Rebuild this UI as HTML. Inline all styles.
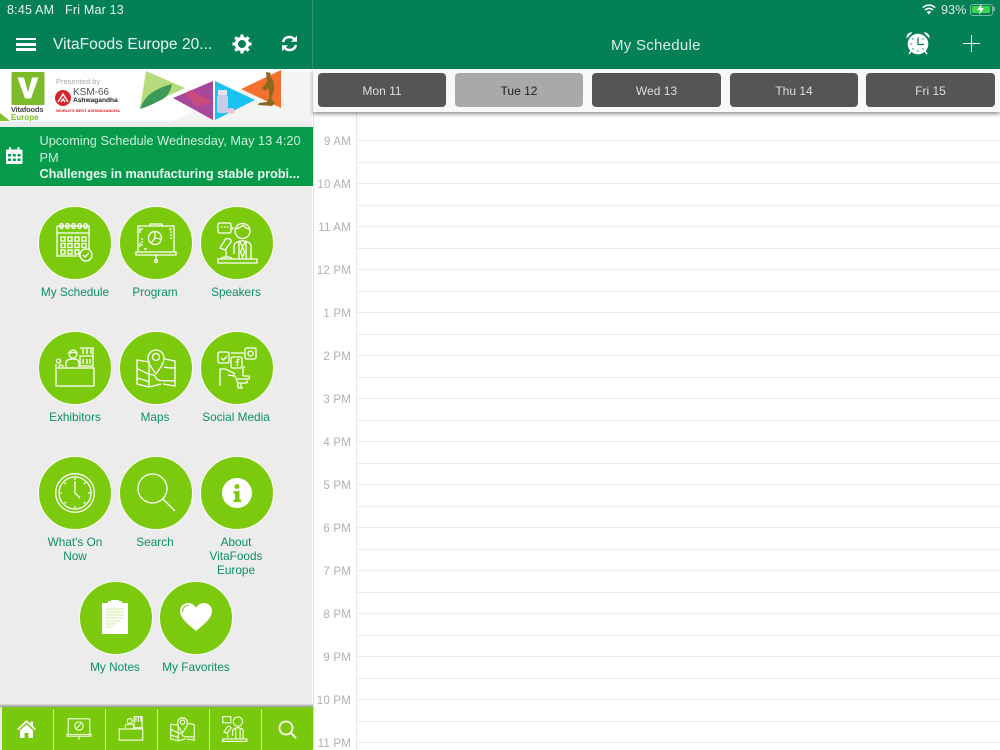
<!DOCTYPE html>
<html><head><meta charset="utf-8">
<style>
html,body{margin:0;padding:0;width:1000px;height:750px;overflow:hidden;background:#fff;font-family:"Liberation Sans",sans-serif}
.a{position:absolute}
.t{position:absolute;white-space:nowrap}
.c{position:absolute;width:72px;height:72px;border-radius:50%;background:#7bca0e;border:1px solid #fbfdf6}
.l{position:absolute;width:84px;text-align:center;color:#0b8f68;font-size:11.8px;line-height:14px}
.btn{position:absolute;top:73px;height:34px;border-radius:4px;background:#555;color:#ddd;font-size:12px;line-height:36px;text-align:center}
.hr{position:absolute;left:357px;right:0;height:1px;background:#ebebeb}
.h{position:absolute;width:351px;left:0;text-align:right;font-size:11.5px;letter-spacing:.2px;color:#b0b0b0;font-weight:normal}
svg{position:absolute;overflow:visible}
svg .s{fill:none;stroke:#fff;stroke-width:1.3}
.bi .s{stroke:#f2fbe4;stroke-width:1.9}
</style></head><body>

<!-- Header -->
<div class="a" style="left:0;top:0;width:1000px;height:69px;background:#038055"></div>
<div class="a" style="left:312px;top:0;width:1px;height:69px;background:#2f946f"></div>
<div class="t" style="left:7px;top:3px;font-size:12.5px;color:#e6f3ee;letter-spacing:.2px">8:45 AM</div>
<div class="t" style="left:65px;top:3px;font-size:12.5px;color:#e6f3ee;letter-spacing:.2px">Fri Mar 13</div>
<div class="a" style="left:16px;top:37.500px;width:20px;height:2.500px;background:#fff"></div>
<div class="a" style="left:16px;top:43px;width:20px;height:2.500px;background:#fff"></div>
<div class="a" style="left:16px;top:48px;width:20px;height:2.500px;background:#fff"></div>
<div class="t" style="left:53px;top:36px;font-size:15.5px;color:#eaf5f0;letter-spacing:.05px">VitaFoods Europe 20...</div>

<!-- Gear -->
<svg style="left:232px;top:34px" width="20" height="20" viewBox="0 0 20 20"><circle cx="10" cy="10" r="5.6" fill="none" stroke="#fff" stroke-width="3.2"/><g stroke="#fff" stroke-width="3.2"><path d="M10 0.5v3M10 16.5v3M.5 10h3M16.5 10h3M3.3 3.3l2.1 2.1M14.6 14.6l2.1 2.1M3.3 16.7l2.1-2.1M14.6 5.4l2.1-2.1"/></g></svg>
<!-- Sync -->
<svg style="left:281px;top:35px" width="17" height="17" viewBox="0 0 17 17"><path d="M2 7C3 3.5 5.5 2 8.5 2c2.2 0 3.700 1 4.700 2.200" fill="none" stroke="#fff" stroke-width="2.400"/><path d="M16 .8v6h-6z" fill="#fff"/><path d="M15 10c-1 3.500-3.500 5-6.500 5-2.200 0-3.700-1-4.700-2.200" fill="none" stroke="#fff" stroke-width="2.400"/><path d="M1 16.200v-6h6z" fill="#fff"/></svg>

<div class="t" style="left:611px;top:37px;font-size:15px;color:#dcefe7;letter-spacing:.27px">My Schedule</div>

<!-- Alarm -->
<svg style="left:905px;top:31px" width="26" height="25" viewBox="0 0 26 25"><path d="M1.500 7.500C1 3.500 4 .8 7.500 1.500z" fill="#fff"/><path d="M24.500 7.500C25 3.500 22 .8 18.500 1.500z" fill="#fff"/><path d="M4 23l2-3M22 23l-2-3" stroke="#fff" stroke-width="1.500"/><circle cx="13" cy="13" r="10.300" fill="#fff"/><path d="M13 6.500V13.500H19" fill="none" stroke="#038055" stroke-width="1.300"/><g fill="#038055"><circle cx="13" cy="20" r=".7"/><circle cx="6" cy="13" r=".7"/><circle cx="8" cy="8" r=".7"/><circle cx="18" cy="8" r=".7"/><circle cx="8" cy="18" r=".7"/><circle cx="18" cy="18" r=".7"/></g></svg>
<!-- Plus -->
<div class="a" style="left:963px;top:43px;width:17px;height:1.300px;background:#fff"></div>
<div class="a" style="left:971px;top:35px;width:1.300px;height:17px;background:#fff"></div>

<!-- Status right -->
<svg style="left:922px;top:4px" width="14" height="11" viewBox="0 0 14 11"><path d="M.8 3.700C4.500.3 9.500.3 13.200 3.700M3 6C5.500 3.900 8.500 3.900 11 6" fill="none" stroke="#fff" stroke-width="1.500"/><path d="M7 10.500L4.700 8C6 6.900 8 6.900 9.300 8z" fill="#fff"/></svg>
<div class="t" style="left:941px;top:3px;font-size:12.7px;color:#d8ece4">93%</div>
<div class="a" style="left:970px;top:4px;width:21px;height:10px;border:1px solid #7ab8a0;border-radius:3px"></div>
<div class="a" style="left:971.500px;top:5.500px;width:18px;height:7px;background:#38d84a;border-radius:1.500px"></div>
<div class="a" style="left:993px;top:7px;width:1.500px;height:4px;background:#7ab8a0"></div>
<svg style="left:976px;top:4px" width="9" height="11" viewBox="0 0 9 11"><path d="M5.500 0L1 6h3L3 11l5-7H5z" fill="#fff"/></svg>

<!-- Left panel -->
<div class="a" style="left:0;top:69px;width:312px;height:681px;background:#ececec"></div>

<!-- Banner -->
<div class="a" style="left:0;top:69px;width:312px;height:53px;background:#fff"></div>
<svg style="left:0;top:69px" width="312" height="53" viewBox="0 0 312 53">
<path d="M0 44l10 8H0z" fill="#7fbf2a"/>
<rect x="11.500" y="3" width="33" height="33" rx="1.500" fill="#7cbc2b"/>
<path d="M17.500 8.500h6.500l4 15 4-15h6.500l-7.500 21h-6z" fill="#fff"/>
<path d="M170 53L280 3v50zM280 3h32v50h-32z" fill="#f4f4f4"/>
<path d="M146 2L185 19 140 40z" fill="#b6db7c"/>
<path d="M140 40c4-12 13-20 32-25-2 11-8 15-13 17-6 3-12 6-19 8z" fill="#3c9a57"/>
<path d="M213 12v39l-40-22z" fill="#a8489a"/>
<path d="M185 24l6-3 22 12-17 5z" fill="#c94a7b"/>
<path d="M215 12v39l40-20z" fill="#18c3f2"/>
<rect x="217" y="26" width="11" height="18" rx="2.500" fill="#c9cdea"/>
<rect x="218" y="21" width="9" height="5" fill="#e6e2ee"/>
<ellipse cx="231" cy="42" rx="4" ry="3" fill="#f1c5d0"/>
<path d="M281 1v38L241 20z" fill="#f5702c"/>
<path d="M266 3l5 1-1 3c5 6 6 14 1 22l4 5-3 3-14-1 1-2 8-1c3-4 3-10 1-14l-3 3-3-3 5-6z" fill="#8a6a1e"/>
</svg>
<div class="t" style="left:11px;top:105px;font-size:7.500px;font-weight:bold;color:#444;letter-spacing:-.2px">Vitafoods</div>
<div class="t" style="left:11px;top:112.500px;font-size:8px;font-weight:bold;color:#7cbc2b">Europe</div>
<div class="t" style="left:56px;top:77px;font-size:7.500px;color:#aaa">Presented by</div>
<div class="a" style="left:55px;top:90px;width:16px;height:16px;border-radius:50%;background:#d8232a"></div>
<svg style="left:55px;top:90px" width="16" height="16" viewBox="0 0 16 16"><path d="M3 12l5-8 5 8M6 12l2-3 2 3" fill="none" stroke="#fff" stroke-width="1.400"/></svg>
<div class="t" style="left:73px;top:87px;font-size:10px;color:#555">KSM-66</div>
<div class="t" style="left:73px;top:96.500px;font-size:6.600px;font-weight:bold;color:#222">Ashwagandha</div>
<div class="t" style="left:56px;top:107.500px;font-size:4px;font-weight:bold;color:#d8232a">WORLD'S BEST ASHWAGANDHA</div>

<!-- Upcoming bar -->
<div class="a" style="left:0;top:127px;width:313px;height:59px;background:#059b4b"></div>
<svg style="left:6px;top:147px" width="17" height="17" viewBox="0 0 17 17"><rect x="0" y="2.500" width="16.500" height="14.500" rx="1" fill="#fff"/><rect x="3" y="0" width="2" height="4" fill="#fff"/><rect x="11.500" y="0" width="2" height="4" fill="#fff"/><g fill="#059b4b"><rect x="2" y="7" width="3" height="2.500"/><rect x="6.800" y="7" width="3" height="2.500"/><rect x="11.600" y="7" width="3" height="2.500"/><rect x="2" y="11.500" width="3" height="2.500"/><rect x="6.800" y="11.500" width="3" height="2.500"/><rect x="11.600" y="11.500" width="3" height="2.500"/></g></svg>
<div class="t" style="left:39.500px;top:133px;font-size:12.750px;color:#cfeedd;line-height:16.500px">Upcoming Schedule Wednesday, May 13 4:20<br>PM</div>
<div class="t" style="left:39.500px;top:166.500px;font-size:12.700px;font-weight:bold;color:#e9f7ef">Challenges in manufacturing stable probi...</div>

<!-- Circles -->
<div class="c" style="left:38px;top:206px"></div>
<div class="c" style="left:119px;top:206px"></div>
<div class="c" style="left:200px;top:206px"></div>
<div class="c" style="left:38px;top:331px"></div>
<div class="c" style="left:119px;top:331px"></div>
<div class="c" style="left:200px;top:331px"></div>
<div class="c" style="left:38px;top:456px"></div>
<div class="c" style="left:119px;top:456px"></div>
<div class="c" style="left:200px;top:456px"></div>
<div class="c" style="left:79px;top:581px"></div>
<div class="c" style="left:159px;top:581px"></div>

<!-- My Schedule icon -->
<svg style="left:56px;top:223px" width="38" height="40" viewBox="0 0 38 40"><path class="s" d="M1 3h32v30H22M1 3v30h20M1 10h32"/><g class="s"><rect x="4" y="0.500" width="3" height="5" rx="1.500"/><rect x="10" y="0.500" width="3" height="5" rx="1.500"/><rect x="16" y="0.500" width="3" height="5" rx="1.500"/><rect x="22" y="0.500" width="3" height="5" rx="1.500"/><rect x="28" y="0.500" width="3" height="5" rx="1.500"/></g><g class="s"><rect x="5" y="14" width="4" height="4"/><rect x="12" y="14" width="4" height="4"/><rect x="19" y="14" width="4" height="4"/><rect x="26" y="14" width="4" height="4"/><rect x="5" y="20.500" width="4" height="4"/><rect x="12" y="20.500" width="4" height="4"/><rect x="19" y="20.500" width="4" height="4"/><rect x="26" y="20.500" width="4" height="4"/><rect x="5" y="27" width="4" height="4"/><rect x="12" y="27" width="4" height="4"/><rect x="19" y="27" width="4" height="4"/></g><circle cx="30" cy="32" r="6" fill="#7bca0e" stroke="#fff" stroke-width="1.300"/><path class="s" d="M27 32l2 2 4-4"/></svg>
<!-- Program icon -->
<svg style="left:136px;top:223px" width="40" height="40" viewBox="0 0 40 40"><path class="s" d="M2 3h36v26H2zM0 29h40v3H0zM14 3V1h12v2M20 32v6"/><circle cx="20" cy="38" r="1.500" class="s"/><circle cx="19" cy="15" r="6.500" class="s"/><path class="s" d="M19 15V8.500M19 15l6 1M19 15l-4 5"/><path class="s" d="M4 10V6h3M33 6h3M4 20v4M34 9h2M34 12h2M34 15h2M5 16h2M5 19h2M5 22h2M8 26h3"/></svg>
<!-- Speakers icon -->
<svg style="left:217px;top:222px" width="40" height="42" viewBox="0 0 40 42"><rect class="s" x="1" y="1" width="13" height="10" rx="1.500"/><path class="s" d="M14 6h2l-1 1.500"/><path d="M4 5h1.500M7 5h1.500M10 5h1.500" stroke="#fff" stroke-width="1.300"/><circle class="s" cx="25.500" cy="9" r="7.500"/><path class="s" d="M19 7c4-1 6-3 7-4M26 3c2 3 4 4 7 4M17 32V24c0-3 3-4 6-5h5c3 1 6 2 6 5v13M22 20v17M29 20v17M23 20l2.500 5 2.500-5M25.500 25l-2 5 2 5 2-5z"/><path class="s" d="M1 41v-4h39v4zM4 37c0-2 4-2 6-2s5 0 5 2M9 35V26"/><path class="s" d="M3 26l5-8c2-3 7-1 6 2l-6 8z"/></svg>
<!-- Exhibitors icon -->
<svg style="left:54px;top:347px" width="42" height="42" viewBox="0 0 42 42"><rect class="s" x="2" y="21" width="38" height="18"/><circle class="s" cx="19" cy="7" r="4"/><path class="s" d="M12 20v-4c0-3 3-4 7-4s6 1 6 4v4M15.500 6c2-1 4-1 7 0"/><path class="s" d="M26 1h13v18H26V9h13M29 7V2M33 7V2M37 7V2M29 17v-5M33 17v-5M36 17v-5"/><circle class="s" cx="4.500" cy="14" r="2"/><path class="s" d="M2 20v-3M5 20c0-3 4-3 4 0"/></svg>
<!-- Maps icon -->
<svg style="left:136px;top:347px" width="40" height="42" viewBox="0 0 40 42"><path class="s" d="M1 13l12 2v25L1 37zM13 40l12-3M27 37l12 2V14l-10-2M1 22c5 1 8 4 12 5s5 0 7 4 7 2 19 3M1 31c4 1 8 2 12 4M28 20c3 1 7 1 11 1M13 15v-1"/><path class="s" d="M20 27c-5-7-8-11-8-16a8 8 0 0 1 16 0c0 5-3 9-8 16z"/><circle class="s" cx="20" cy="10" r="3.500"/></svg>
<!-- Social icon -->
<svg style="left:217px;top:347px" width="40" height="42" viewBox="0 0 40 42"><rect class="s" x="1" y="5" width="11" height="11" rx="1.500"/><path class="s" d="M4 11l2.500 2 3.500-4"/><rect class="s" x="14" y="10" width="11" height="11" rx="1.500"/><path d="M20.500 19v-6.500h2M18.500 15h3.500" stroke="#fff" stroke-width="1.300" fill="none"/><rect class="s" x="28" y="1" width="11" height="11" rx="1.500"/><circle class="s" cx="33.500" cy="6.500" r="2.500"/><path class="s" d="M14 6h13M3 39V22h5l9 4v3l-6-1M27 21v-2M18 29c3 5 3 10 3 12h5M20 36h9c2 0 2-2 0-2M20 32h11c2 0 2-3 0-3h-5M26 29v-8M24 41v-5"/></svg>
<!-- Clock icon -->
<svg style="left:55px;top:473px" width="40" height="40" viewBox="0 0 40 40"><circle class="s" cx="20" cy="20" r="19.300"/><circle class="s" cx="20" cy="20" r="16"/><path class="s" d="M20 8v12l5 5M20 5v2M20 33v2M5 20h2M33 20h2M9.500 9.500l1.500 1.500M29 29l1.500 1.500M9.500 30.500l1.500-1.500M29 11l1.500-1.500"/></svg>
<!-- Search icon -->
<svg style="left:137px;top:473px" width="40" height="40" viewBox="0 0 40 40"><circle class="s" cx="15.500" cy="15.500" r="14.500"/><path class="s" d="M26 26l12 12"/></svg>
<!-- Info icon -->
<div class="a" style="left:222px;top:478px;width:30px;height:30px;border-radius:50%;background:#fff"></div>
<svg style="left:222px;top:478px" width="30" height="30" viewBox="0 0 30 30"><circle cx="15" cy="8.500" r="2.500" fill="#7bca0e"/><path d="M11.500 13h6v8.500h1.500V24h-7.500v-2.500H13v-6h-1.500z" fill="#7bca0e"/></svg>
<!-- Notes icon -->
<svg style="left:102px;top:600px" width="26" height="34" viewBox="0 0 26 34"><path d="M0 3h6V1h3V0h8v1h3v2h6v31H0z" fill="#fff"/><path d="M4 9h18M4 12h18M4 15h18M4 18h18M4 21h14M4 24h10M4 27h7" stroke="#cdeb9e" stroke-width="1"/></svg>
<!-- Heart icon -->
<svg style="left:180px;top:603px" width="32" height="28" viewBox="0 0 32 28"><path d="M16 28C8 21 0 15.500 0 8c0-5 4-8 8-8 3.500 0 6.500 2 8 5 1.500-3 4.500-5 8-5 4 0 8 3 8 8 0 7.500-8 13-16 20z" fill="#fff"/><path d="M2.500 9C2.500 5 5 2.500 8.500 2.500" fill="none" stroke="#7bca0e" stroke-width="1"/></svg>

<!-- Labels -->
<div class="l" style="left:33px;top:285px">My Schedule</div>
<div class="l" style="left:113px;top:285px">Program</div>
<div class="l" style="left:194px;top:285px">Speakers</div>
<div class="l" style="left:33px;top:410px">Exhibitors</div>
<div class="l" style="left:113px;top:410px">Maps</div>
<div class="l" style="left:194px;top:410px">Social Media</div>
<div class="l" style="left:33px;top:535px">What's On<br>Now</div>
<div class="l" style="left:113px;top:535px">Search</div>
<div class="l" style="left:194px;top:535px">About<br>VitaFoods<br>Europe</div>
<div class="l" style="left:73px;top:660px">My Notes</div>
<div class="l" style="left:154px;top:660px">My Favorites</div>

<!-- Bottom bar -->
<div class="a" style="left:0;top:704px;width:313px;height:3px;background:linear-gradient(#e0e0e0,#9a9a9a)"></div>
<div class="a" style="left:2px;top:707px;width:311px;height:43px;background:#78c80b"></div>
<div class="a" style="left:52.500px;top:709px;width:1px;height:41px;background:#cdeb9e"></div>
<div class="a" style="left:104.500px;top:709px;width:1px;height:41px;background:#cdeb9e"></div>
<div class="a" style="left:156.500px;top:709px;width:1px;height:41px;background:#cdeb9e"></div>
<div class="a" style="left:208.500px;top:709px;width:1px;height:41px;background:#cdeb9e"></div>
<div class="a" style="left:260.500px;top:709px;width:1px;height:41px;background:#cdeb9e"></div>
<!-- bottom icons -->
<svg style="left:17px;top:720px" width="19" height="18" viewBox="0 0 19 18"><path d="M9.500 0L0 9l1.200 1.200L9.500 2.500l8.300 7.700L19 9l-3-2.800V1.500h-2.500v2.400z" fill="#fff"/><path d="M3 10.500L9.500 4.500 16 10.500V18h-4.500v-5h-4v5H3z" fill="#fff"/></svg>
<svg class="bi" style="left:67px;top:717px" width="24" height="24" viewBox="0 0 40 40"><path class="s" d="M2 3h36v26H2zM0 29h40v3H0zM20 32v6"/><circle class="s" cx="20" cy="15" r="7"/><path class="s" d="M20 15l4-6M20 15l-5 4"/></svg>
<svg class="bi" style="left:118px;top:716px" width="26" height="26" viewBox="0 0 42 42"><rect class="s" x="2" y="21" width="38" height="18"/><circle class="s" cx="19" cy="8" r="4"/><path class="s" d="M12 20v-4c0-2 3-3 7-3s6 1 6 3v4M26 1h13v18H26zM29 9V2M33 9V2M37 9V2"/></svg>
<svg class="bi" style="left:170px;top:716px" width="25" height="26" viewBox="0 0 40 42"><path class="s" d="M1 13l12 2v25L1 37zM13 40l12-3M27 37l12 2V14l-10-2M1 22c5 1 8 4 12 5s5 0 7 4 7 2 19 3M1 31c4 1 8 2 12 4"/><path class="s" d="M20 27c-5-7-8-11-8-16a8 8 0 0 1 16 0c0 5-3 9-8 16z"/><circle class="s" cx="20" cy="10" r="3.500"/></svg>
<svg class="bi" style="left:222px;top:716px" width="25" height="26" viewBox="0 0 40 42"><rect class="s" x="1" y="1" width="13" height="10"/><circle class="s" cx="25.500" cy="9" r="7.500"/><path class="s" d="M17 32V24c0-3 3-4 6-5h5c3 1 6 2 6 5v13M22 20v17M29 20v17M1 41v-4h39v4zM9 35V26M3 26l5-8c2-3 7-1 6 2l-6 8z"/></svg>
<svg style="left:278px;top:720px" width="19" height="19" viewBox="0 0 19 19"><circle cx="8" cy="8" r="6.500" fill="none" stroke="#fff" stroke-width="1.700"/><path d="M12.700 12.700L18 18" stroke="#fff" stroke-width="2"/></svg>

<!-- Right: schedule -->
<div class="a" style="left:313px;top:69px;width:687px;height:43px;background:#f8f8f8;box-shadow:0 2px 4px rgba(0,0,0,.45);z-index:2"></div>
<div class="btn" style="left:318px;width:128px;z-index:3">Mon 11</div>
<div class="btn" style="left:455px;width:128px;background:#a9a9a9;color:#222;z-index:3">Tue 12</div>
<div class="btn" style="left:592px;width:129px;z-index:3">Wed 13</div>
<div class="btn" style="left:730px;width:128px;z-index:3">Thu 14</div>
<div class="btn" style="left:866px;width:129px;z-index:3">Fri 15</div>

<div class="a" style="left:356px;top:113px;width:1px;height:637px;background:#e6e6e6"></div>
<div class="a" style="left:313px;top:69px;width:1px;height:681px;background:#dcdcdc"></div>

<div class="hr" style="top:140px"></div><div class="hr" style="top:162px"></div>
<div class="hr" style="top:183px"></div><div class="hr" style="top:205px"></div>
<div class="hr" style="top:226px"></div><div class="hr" style="top:248px"></div>
<div class="hr" style="top:269px"></div><div class="hr" style="top:291px"></div>
<div class="hr" style="top:312px"></div><div class="hr" style="top:334px"></div>
<div class="hr" style="top:355px"></div><div class="hr" style="top:377px"></div>
<div class="hr" style="top:398px"></div><div class="hr" style="top:420px"></div>
<div class="hr" style="top:441px"></div><div class="hr" style="top:463px"></div>
<div class="hr" style="top:484px"></div><div class="hr" style="top:506px"></div>
<div class="hr" style="top:527px"></div><div class="hr" style="top:549px"></div>
<div class="hr" style="top:570px"></div><div class="hr" style="top:592px"></div>
<div class="hr" style="top:613px"></div><div class="hr" style="top:635px"></div>
<div class="hr" style="top:656px"></div><div class="hr" style="top:678px"></div>
<div class="hr" style="top:699px"></div><div class="hr" style="top:721px"></div>
<div class="hr" style="top:742px"></div>

<div class="h" style="top:136px">9 AM</div>
<div class="h" style="top:179px">10 AM</div>
<div class="h" style="top:222px">11 AM</div>
<div class="h" style="top:265px">12 PM</div>
<div class="h" style="top:308px">1 PM</div>
<div class="h" style="top:351px">2 PM</div>
<div class="h" style="top:394px">3 PM</div>
<div class="h" style="top:437px">4 PM</div>
<div class="h" style="top:480px">5 PM</div>
<div class="h" style="top:523px">6 PM</div>
<div class="h" style="top:566px">7 PM</div>
<div class="h" style="top:609px">8 PM</div>
<div class="h" style="top:652px">9 PM</div>
<div class="h" style="top:695px">10 PM</div>
<div class="h" style="top:738px">11 PM</div>

</body></html>
